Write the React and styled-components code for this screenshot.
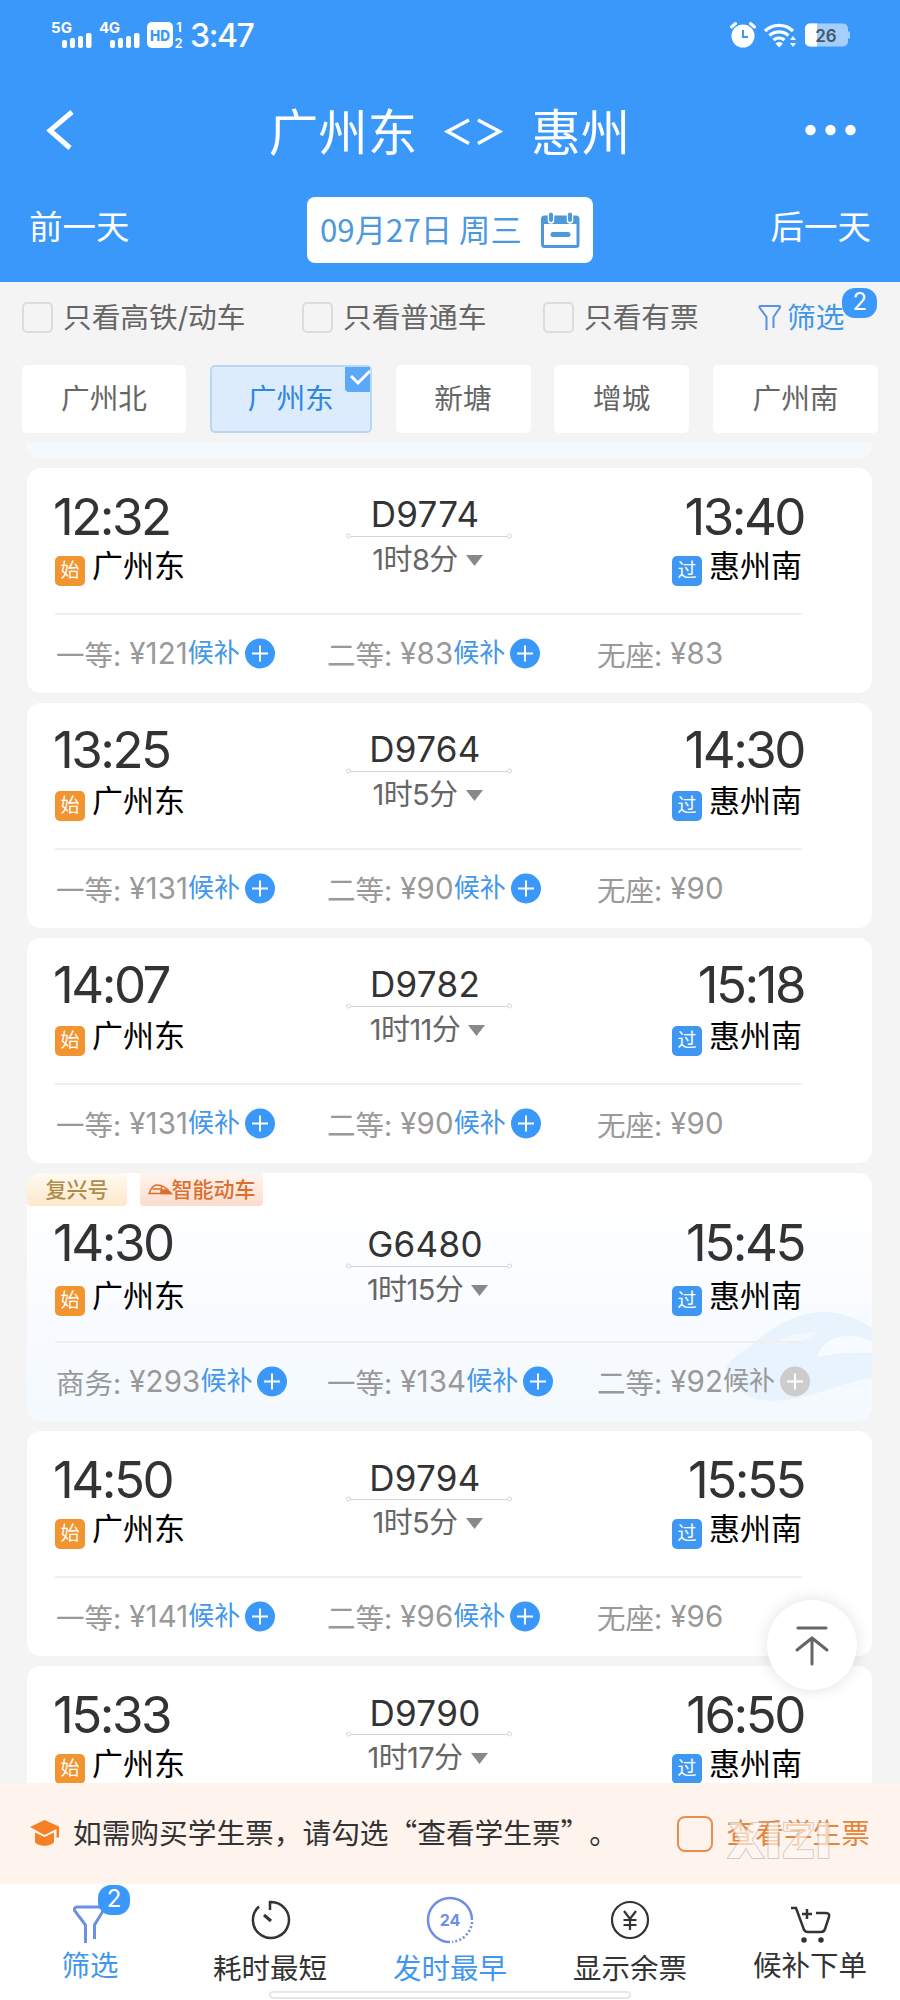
import React from "react"
import styled, { createGlobalStyle } from "styled-components"

const GlobalStyle = createGlobalStyle`
  * {
    box-sizing: border-box;
  }
  body {
    margin: 0;
    background: #f4f4f4;
    font-family: Inter, "Noto Sans CJK SC", sans-serif;
  }
  svg {
    overflow: visible;
  }
`

const Page = styled.div`
  position: relative;
  display: flex;
  flex-direction: column;
  width: 900px;
  height: 2000px;
  overflow: hidden;
  background: #f4f4f4;
`

const Header = styled.header`
  flex: none;
  height: 282px;
  background: #3a98fb;
  color: #fff;
`

const StatusBar = styled.div`
  display: flex;
  justify-content: space-between;
  align-items: center;
  height: 70px;
  padding: 0 50px 0 51px;
`

const StatusGroup = styled.div`
  display: flex;
  align-items: center;
  gap: ${props => props.$gap};
`

const Clock = styled.span`
  margin-left: -1px;
  font-size: 32px;
  font-weight: 500;
  letter-spacing: -1.4px;
`

const TitleBar = styled.div`
  display: flex;
  justify-content: space-between;
  align-items: center;
  height: 120px;
  padding: 0 43px 0 46px;
`

const Title = styled.h1`
  display: flex;
  align-items: center;
  margin: 0 0 0 18px;
  font-family: "Noto Sans CJK SC", sans-serif;
  font-size: 49.5px;
  font-weight: 400;
  line-height: 60px;
`

const Swap = styled.svg`
  margin: 3px 28px 0 28px;
`

const DateBar = styled.div`
  display: flex;
  justify-content: space-between;
  align-items: center;
  height: 80px;
  padding: 0 29px;
  font-family: "Noto Sans CJK SC", sans-serif;
  font-size: 33.5px;
`

const DayLink = styled.span`
  margin-top: -12px;
`

const DateBox = styled.div`
  display: flex;
  justify-content: space-between;
  align-items: center;
  width: 286px;
  height: 66px;
  padding: 0 13px 0 13px;
  border-radius: 8px;
  background: #fff;
  color: #4e98dc;
  font-size: 31.3px;
  white-space: nowrap;
`

const DateText = styled.span`
  margin-top: -3px;
`

const FilterRow = styled.div`
  display: flex;
  flex: none;
  align-items: center;
  height: 83px;
  padding: 0 22px;
  color: #666;
  font-size: 28.7px;
  line-height: 40px;
  white-space: nowrap;
`

const CheckLabel = styled.label`
  display: flex;
  align-items: center;
  gap: 10px;
  width: ${props => props.$width};
  margin-top: -12px;
`

const Box = styled.span`
  flex: none;
  width: ${props => props.$size || "31px"};
  height: ${props => props.$size || "31px"};
  border: 2px solid ${props => props.$color || "#dcdcdc"};
  border-radius: ${props => props.$radius || "5px"};
`

const FilterLink = styled.div`
  position: relative;
  display: flex;
  align-items: center;
  gap: 5px;
  margin-top: -12px;
  color: #4297ec;
`

const Badge = styled.span`
  position: absolute;
  top: ${props => props.$top};
  right: ${props => props.$right};
  width: ${props => props.$width};
  height: 30px;
  border-radius: 13px;
  background: #3a98fb;
  color: #fff;
  font-size: 24px;
  line-height: 28px;
  text-align: center;
`

const Tabs = styled.div`
  display: flex;
  flex: none;
  justify-content: space-between;
  height: 68px;
  padding: 0 22px;
`

const Tab = styled.button`
  position: relative;
  width: ${props => props.$width};
  padding: 0 0 6px;
  border: ${props => (props.$active ? "2px solid #b8d7f4" : "none")};
  border-radius: 5px;
  background: ${props => (props.$active ? "#dcecfd" : "#fff")};
  color: ${props => (props.$active ? "#2f87e0" : "#666")};
  font-family: inherit;
  font-size: 28.7px;
`

const TabCheck = styled.svg`
  position: absolute;
  top: 0;
  right: 0;
`

const List = styled.main`
  flex: 1;
  min-height: 0;
  margin-top: 9px;
  padding: 0 28px 0 27px;
  overflow: hidden;
`

const PrevCard = styled.div`
  height: 17px;
  margin-bottom: 9px;
  border-radius: 0 0 14px 14px;
  background: #f4f9fe;
`

const Card = styled.article`
  position: relative;
  height: ${props => (props.$tagged ? "248px" : "225px")};
  margin-bottom: 10px;
  padding: 0 70px 0 28px;
  border-radius: 14px;
  overflow: hidden;
  background: ${props => (props.$tagged ? "linear-gradient(#fff 10%, #f8fbff 60%, #f3f9fe)" : "#fff")};
`

const Tags = styled.div`
  display: flex;
  gap: 13px;
  height: 23px;
  margin-left: -28px;
`

const Tag = styled.span`
  display: flex;
  flex: none;
  align-items: center;
  justify-content: center;
  width: ${props => props.$width};
  height: 33px;
  border-radius: 0 0 4px 4px;
  background: ${props => (props.$gold ? "linear-gradient(#fffaf2, #fde8c9)" : "linear-gradient(#fff5f0, #fcdccd)")};
  color: ${props => (props.$gold ? "#ae8d4a" : "#dc6f2e")};
  font-size: 21px;
  font-weight: 500;
  line-height: 30px;
`

const Trip = styled.div`
  position: relative;
  display: flex;
  justify-content: space-between;
  height: 145px;
`

const Stop = styled.div`
  display: flex;
  flex-direction: column;
  align-items: ${props => (props.$end ? "flex-end" : "flex-start")};
  width: 200px;
  padding-top: 23px;
`

const Time = styled.span`
  height: 53px;
  margin: 0 ${props => (props.$end ? "-2px" : "0")} 0 -2px;
  color: #333;
  font-size: 51px;
  line-height: ${props => (props.$raised ? "47px" : "52px")};
  letter-spacing: -2.5px;
`

const Station = styled.span`
  display: flex;
  align-items: center;
  gap: 7px;
  margin-top: ${props => (props.$tagged ? "3px" : "1px")};
  color: #000;
  font-size: 31px;
  line-height: 41px;
`

const StopMark = styled.span`
  width: 30px;
  height: 30px;
  margin-top: 10px;
  border-radius: 5px;
  background: ${props => (props.$end ? "#3f97f4" : "#f2942f")};
  color: #fff;
  font-size: 19px;
  line-height: 30px;
  text-align: center;
`

const Train = styled.div`
  display: flex;
  flex-direction: column;
  align-items: center;
  width: 166px;
  padding-top: ${props => (props.$tagged ? "27px" : "25px")};
`

const Code = styled.span`
  height: 40px;
  margin-right: 7px;
  color: #333;
  font-size: 35px;
  line-height: ${props => (props.$low ? "45px" : "42px")};
  letter-spacing: 0.3px;
`

const Line = styled.svg`
  display: block;
  flex: none;
`

const Duration = styled.span`
  display: flex;
  align-items: center;
  gap: 8px;
  height: 36px;
  margin-right: 2px;
  color: #666;
  font-size: 29px;
  letter-spacing: -0.6px;
`

const Prices = styled.div`
  display: grid;
  grid-template-columns: 271px 270px 1fr;
  position: relative;
  height: 78px;
  margin-right: -60px;
  padding-left: 1px;
  color: #999;
`

const Rule = styled.div`
  position: relative;
  height: 2px;
  background: #efefef;
`

const Price = styled.span`
  display: flex;
  align-items: center;
  height: 76px;
  font-size: 28.5px;
  white-space: nowrap;
`

const Fare = styled.span`
  margin-left: 8px;
  font-size: 29.500px;
  letter-spacing: 0.1px;
`

const Waitlist = styled.span`
  display: flex;
  align-items: center;
  gap: 5px;
  color: ${props => (props.$off ? "#999" : "#4297ec")};
  font-size: 26px;
`

const WaitText = styled.span`
  padding-bottom: 5px;
`

const TrainArt = styled.svg`
  position: absolute;
  right: 0;
  bottom: 18px;
`

const TopButton = styled.button`
  position: absolute;
  top: 1600px;
  left: 767px;
  display: flex;
  align-items: center;
  justify-content: center;
  width: 90px;
  height: 90px;
  padding: 0;
  border: none;
  border-radius: 50%;
  background: #fff;
  box-shadow: 0 0 16px rgba(0, 0, 0, 0.12);
`

const Notice = styled.div`
  position: relative;
  display: flex;
  flex: none;
  align-items: center;
  height: 101px;
  padding: 0 30px;
  background: #fff3ed;
  color: #333;
  font-family: "Noto Sans CJK SC", sans-serif;
  font-size: 28.7px;
  white-space: nowrap;
  text-spacing-trim: space-all;
`

const NoticeText = styled.span`
  width: 604px;
  margin: -5px 0 0 13px;
`

const StudentText = styled.span`
  margin: -5px 0 0 14px;
  color: #e5853a;
`

const Watermark = styled.span`
  position: absolute;
  top: 32px;
  left: 727px;
  color: #fff8f4;
  font-family: Inter, sans-serif;
  font-size: 48px;
  font-weight: 900;
  line-height: 52px;
  letter-spacing: 1.5px;
  -webkit-text-stroke: 2px #bdb5b1;
  paint-order: stroke fill;
  stroke-linejoin: round;
  opacity: 0.65;
`

const Nav = styled.nav`
  position: relative;
  display: grid;
  flex: none;
  grid-template-columns: repeat(5, 1fr);
  height: 116px;
  background: #fff;
`

const NavItem = styled.div`
  position: relative;
  display: flex;
  flex-direction: column;
  align-items: center;
  padding-top: 11px;
  color: ${props => (props.$active ? "#4297ec" : "#333")};
  font-size: 28.5px;
  line-height: 40px;
`

const NavIcon = styled.svg`
  display: block;
  margin-bottom: ${props => (props.$low ? "4px" : "1px")};
`

const HomeBar = styled.div`
  position: absolute;
  top: 107px;
  left: 269px;
  width: 362px;
  height: 8px;
  border: 2px solid #e8e8e8;
  border-radius: 4px;
  background: #fff;
`

const tabs = [
  { name: "广州北", width: "164px" },
  { name: "广州东", width: "162px", active: true },
  { name: "新塘", width: "135px" },
  { name: "增城", width: "135px" },
  { name: "广州南", width: "165px" },
]

const trains = [
  { code: "D9774", from: "12:32", to: "13:40", time: "1时8分", prices: [["一等", 121, "on"], ["二等", 83, "on"], ["无座", 83]] },
  { code: "D9764", from: "13:25", to: "14:30", time: "1时5分", raised: true, prices: [["一等", 131, "on"], ["二等", 90, "on"], ["无座", 90]] },
  { code: "D9782", from: "14:07", to: "15:18", time: "1时11分", raised: true, prices: [["一等", 131, "on"], ["二等", 90, "on"], ["无座", 90]] },
  { code: "G6480", from: "14:30", to: "15:45", time: "1时15分", tagged: true, prices: [["商务", 293, "on"], ["一等", 134, "on"], ["二等", 92, "off"]] },
  { code: "D9794", from: "14:50", to: "15:55", time: "1时5分", low: true, prices: [["一等", 141, "on"], ["二等", 96, "on"], ["无座", 96]] },
  { code: "D9790", from: "15:33", to: "16:50", time: "1时17分", low: true, prices: [["一等", 141, "on"], ["二等", 96, "on"], ["无座", 96]] },
]

const Signal = ({ label }) => (
  <svg width="41" height="28" viewBox="0 0 41 28" fill="#fff">
    <text x="0" y="12" fontFamily="Inter, sans-serif" fontSize="15" fontWeight="700" textLength="21">{label}</text>
    <rect x="11" y="19" width="5" height="8" rx="2" />
    <rect x="19" y="17" width="5" height="10" rx="2" />
    <rect x="27" y="15" width="5" height="12" rx="2" />
    <rect x="35" y="12" width="5.500" height="15" rx="2" />
  </svg>
)

const HdBadge = () => (
  <svg width="37" height="28" viewBox="0 0 37 28">
    <rect x="0" y="1" width="26" height="26" rx="5" fill="#fff" />
    <text x="13" y="19.500" fontFamily="Inter, sans-serif" fontSize="15" fontWeight="800" textAnchor="middle" textLength="20" lengthAdjust="spacingAndGlyphs" fill="#3a98fb">HD</text>
    <g fill="#fff" fontFamily="Inter, sans-serif" fontSize="13" fontWeight="600" textAnchor="middle">
      <text x="32" y="11">1</text>
      <text x="31.500" y="27">2</text>
    </g>
  </svg>
)

const AlarmIcon = () => (
  <svg width="26" height="26" viewBox="0 0 26 26" fill="none">
    <circle cx="13" cy="14" r="11.500" fill="#fff" />
    <path d="M1.500 5 5.500 1.500M24.500 5 20.500 1.500" stroke="#fff" strokeWidth="3" strokeLinecap="round" />
    <path d="M13 8v7h5" stroke="#3a98fb" strokeWidth="2" />
  </svg>
)

const WifiIcon = () => (
  <svg width="33" height="25" viewBox="0 0 33 25" fill="none">
    <g stroke="#fff" strokeWidth="3.200">
      <path d="M1 8a20 20 0 0 1 28 0" />
      <path d="M5.500 12.500a14 14 0 0 1 19 0" />
      <path d="M9.500 17a8.500 8.500 0 0 1 11 0" />
    </g>
    <path d="M11.500 20.500q3.700-2.800 7.400 0L15.200 24.500z" fill="#fff" />
    <path d="M29 13l3 4h-6zM29 24l3-4h-6z" fill="#fff" />
  </svg>
)

const Battery = () => (
  <svg width="45" height="24" viewBox="0 0 45 24">
    <rect x="0" y="0.500" width="43" height="23" rx="5" fill="#a5cffb" />
    <path d="M5 .5h7v23H5a5 5 0 0 1-5-5v-13a5 5 0 0 1 5-5z" fill="#fff" />
    <path d="M43 8.500h1a1 1 0 0 1 1 1v5a1 1 0 0 1-1 1h-1z" fill="#a5cffb" />
    <text x="21" y="18.500" fontFamily="Inter, sans-serif" fontSize="17" fontWeight="600" textAnchor="middle" fill="#44576c">26</text>
  </svg>
)

const CalendarIcon = () => (
  <svg width="39" height="37" viewBox="0 0 39 37">
    <rect x="1.500" y="5" width="35.500" height="29.500" rx="2" fill="#fff" stroke="#4e98dc" strokeWidth="3" />
    <path d="M1 4h36v8H1z" fill="#4e98dc" />
    <path d="M10 2.500v6M29 2.500v6" stroke="#fff" strokeWidth="6.500" strokeLinecap="round" />
    <path d="M10 2.500v5.500M29 2.500v5.500" stroke="#4e98dc" strokeWidth="4" strokeLinecap="round" />
    <path d="M12 22.500h15" stroke="#4e98dc" strokeWidth="5" strokeLinecap="round" />
  </svg>
)

const PlusIcon = ({ off }) => (
  <svg width="30" height="30" viewBox="0 0 30 30">
    <circle cx="15" cy="15.500" r="15" fill={off ? "#ccc" : "#3a98fb"} />
    <path d="M15 7.500v16M7 15.500h16" stroke="#fff" strokeWidth="2" />
  </svg>
)

const TrainCard = ({ train }) => {

const { code, from, to, time, tagged, raised, low, prices } = train;

return (
  <Card $tagged={tagged}>
    {tagged && (
      <>
        <TrainArt width="146" height="92" viewBox="0 0 146 92">
          <path d="M0 57C4 48 14 42 24 36 40 20 68 1 97 1c18 0 34 6 49 16v50c-14 2-27 6-39 10-24 8-46 15-73 12-14-2-28-12-34-32z" fill="#e9f3fd" />
          <path d="M91 46c4-14 16-21 32-21 8 0 16 2 23 5v12c-18-1-37 0-55 4z" fill="#f8fbff" />
          <path d="M48 33c10-8 26-12 43-11-8 7-24 11-43 11z" fill="#f3f8fe" />
        </TrainArt>
        <Tags>
          <Tag $gold $width="100px">复兴号</Tag>
          <Tag $width="123px">
            <svg width="24" height="13" viewBox="0 0 24 13" fill="none" stroke="#dc6f2e" strokeWidth="1.500">
              <path d="M1 10.500C3 5 6 2 9 2c6 0 10 3 14 8.500zM4.500 6h9V3" />
              <path d="M13 7h5l5 3.500H13z" fill="#dc6f2e" />
            </svg>
            智能动车
          </Tag>
        </Tags>
      </>
    )}
    <Trip>
      <Stop>
        <Time $raised={raised || tagged}>{from}</Time>
        <Station $tagged={tagged}><StopMark>始</StopMark>广州东</Station>
      </Stop>
      <Train $tagged={tagged}>
        <Code $low={low}>{code}</Code>
        <Line width="166" height="6" viewBox="0 0 166 6" fill="none" stroke="#d4d4d4">
          <circle cx="2.500" cy="3" r="2" />
          <path d="M5 3.500h156" />
          <circle cx="163.500" cy="3" r="2" />
        </Line>
        <Duration>
          {time}
          <svg width="17" height="11" viewBox="0 0 17 11"><path d="M0 3h17L8.500 14z" fill="#888" /></svg>
        </Duration>
      </Train>
      <Stop $end>
        <Time $end $raised={raised || tagged}>{to}</Time>
        <Station $tagged={tagged}><StopMark $end>过</StopMark>惠州南</Station>
      </Stop>
    </Trip>
    <Rule />
    <Prices>
      {prices.map(([seat, fare, wait]) => (
        <Price key={seat}>
          {seat}:<Fare>¥{fare}</Fare>
          {wait && (
            <Waitlist $off={wait === "off"}><WaitText>候补</WaitText><PlusIcon off={wait === "off"} /></Waitlist>
          )}
        </Price>
      ))}
    </Prices>
  </Card>
)
}

const App = () => (
  <Page>
    <GlobalStyle />
    <Header>
      <StatusBar>
        <StatusGroup $gap="7px">
          <Signal label="5G" />
          <Signal label="4G" />
          <HdBadge />
          <Clock>3:47</Clock>
        </StatusGroup>
        <StatusGroup $gap="8px">
          <AlarmIcon />
          <WifiIcon />
          <Battery />
        </StatusGroup>
      </StatusBar>
      <TitleBar>
        <svg width="29" height="40" viewBox="0 0 29 40" fill="none" stroke="#fff" strokeWidth="5"><path d="M26 2 4 20.500 24 38" /></svg>
        <Title>
          广州东
          <Swap width="58" height="28" viewBox="0 0 58 28" fill="none" stroke="#fff" strokeWidth="3.500">
            <path d="M24 2 2.500 13.500 24 25.500M33 2l21.500 11.500L33 25.500" />
          </Swap>
          惠州
        </Title>
        <svg width="51" height="12" viewBox="0 0 51 12" fill="#fff">
          <circle cx="4.500" cy="6" r="5.200" />
          <circle cx="24.500" cy="6" r="5.200" />
          <circle cx="44.500" cy="6" r="5.200" />
        </svg>
      </TitleBar>
      <DateBar>
        <DayLink>前一天</DayLink>
        <DateBox><DateText>09月27日 周三</DateText><CalendarIcon /></DateBox>
        <DayLink>后一天</DayLink>
      </DateBar>
    </Header>
    <FilterRow>
      <CheckLabel $width="280px"><Box />只看高铁/动车</CheckLabel>
      <CheckLabel $width="241px"><Box />只看普通车</CheckLabel>
      <CheckLabel $width="215px"><Box />只看有票</CheckLabel>
      <FilterLink>
        <svg width="24" height="26" viewBox="0 0 24 26" fill="none" stroke="#5b8fe6" strokeWidth="2"><path d="M8.500 25V12L1.500 2.500Q1 1 2.500 1h18.500q1.500 0 1 1.500L15.500 12v11" /></svg>
        筛选
        <Badge $top="-10px" $right="-33px" $width="35px">2</Badge>
      </FilterLink>
    </FilterRow>
    <Tabs>
      {tabs.map(tab => (
        <Tab key={tab.name} $width={tab.width} $active={tab.active}>
          {tab.name}
          {tab.active && (
            <TabCheck width="25" height="25" viewBox="0 0 25 25">
              <path d="M0 0h25v25H4a4 4 0 0 1-4-4z" fill="#5ba7f8" />
              <path d="m6 9 7 7L25 4" fill="none" stroke="#fff" strokeWidth="3" />
            </TabCheck>
          )}
        </Tab>
      ))}
    </Tabs>
    <List>
      <PrevCard />
      {trains.map(train => <TrainCard key={train.code} train={train} />)}
    </List>
    <Notice>
      <svg width="30" height="27" viewBox="0 0 30 27" fill="#f58025">
        <path d="M14.500 0 29 6.500v11h-2.500V9L14.500 15 0 7z" />
        <path d="M5 12.500 14.500 17l9.500-4.500V22c-3 5-16 5-19 0z" />
      </svg>
      <NoticeText>如需购买学生票，请勾选“查看学生票”。</NoticeText>
      <Box $size="36px" $color="#e59050" $radius="8px" />
      <StudentText>查看学生票</StudentText>
      <Watermark>XIZI</Watermark>
    </Notice>
    <Nav>
      <NavItem $active>
        <NavIcon width="50" height="50" viewBox="0 0 50 50" fill="none" stroke="#6c8fe8" strokeWidth="3">
          <path d="M20.500 48V30L9.500 15.500Q9 12 12 12h27l-1 4-8.500 14v14" />
        </NavIcon>
        筛选
        <Badge $top="1px" $right="50px" $width="32px">2</Badge>
      </NavItem>
      <NavItem>
        <NavIcon $low width="50" height="50" viewBox="0 0 50 50" fill="none" stroke="#333" strokeWidth="2.500">
          <path d="M25 15V7a18 18 0 1 1-11 4.500" />
          <path d="m19 20 7 6" strokeWidth="3" />
        </NavIcon>
        耗时最短
      </NavItem>
      <NavItem $active>
        <NavIcon $low width="50" height="50" viewBox="0 0 50 50" fill="none" stroke="#6c8fe8" strokeWidth="2.500">
          <path d="M25 47A22 22 0 1 1 47 25" />
          <path d="M47 27A22 22 0 0 1 27 47" strokeDasharray="2 2.200" />
          <text x="25" y="31" fontFamily="Inter, sans-serif" fontSize="16" fontWeight="700" textAnchor="middle" fill="#6c8fe8" stroke="none">24</text>
        </NavIcon>
        发时最早
      </NavItem>
      <NavItem>
        <NavIcon $low width="50" height="50" viewBox="0 0 50 50" fill="none" stroke="#333" strokeWidth="2.200">
          <circle cx="25" cy="25" r="18" />
          <path d="m19 16 6 8 6-8M25 24v11M18.500 25h13M18.500 30h13" />
        </NavIcon>
        显示余票
      </NavItem>
      <NavItem>
        <NavIcon width="50" height="50" viewBox="0 0 50 50" fill="none" stroke="#333" strokeWidth="2.500">
          <path d="M6 13h5l7 19q1 5 5 5h13q3 0 4-3l4-12q1-4-3-4H31" />
          <path d="M22 14v10M17 19h10" />
          <circle cx="19" cy="45" r="1.500" fill="#333" />
          <circle cx="36" cy="45" r="1.500" fill="#333" />
        </NavIcon>
        候补下单
      </NavItem>
      <HomeBar />
    </Nav>
    <TopButton>
      <svg width="34" height="40" viewBox="0 0 34 40" fill="none" stroke="#666" strokeWidth="3" strokeLinecap="round">
        <path d="M3 3h28M17 13v26M2 25l15-12 15 12" />
      </svg>
    </TopButton>
  </Page>
)

export default App
